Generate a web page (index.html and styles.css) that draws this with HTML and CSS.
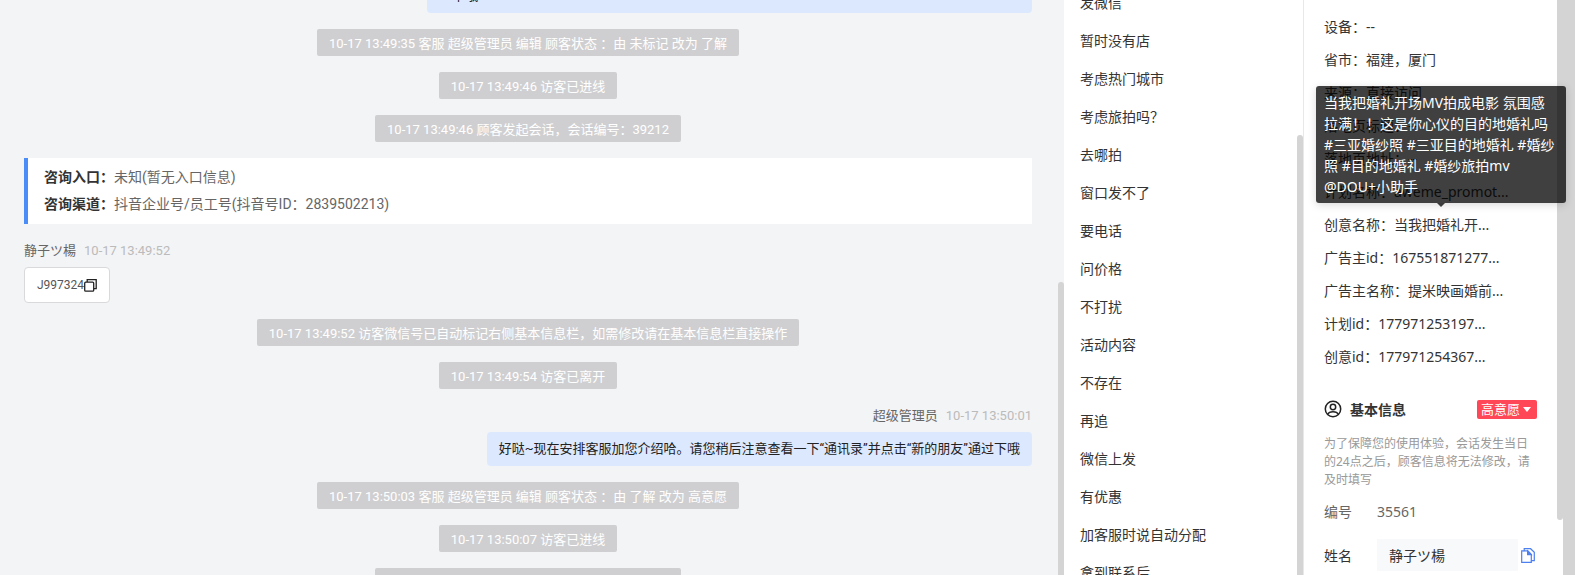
FILE: index.html
```html
<!DOCTYPE html>
<html lang="zh-CN">
<head>
  <meta charset="UTF-8">
  <meta name="viewport" content="width=device-width, initial-scale=1.0">
  <title>客服会话</title>
  <link rel="stylesheet" href="styles.css">
</head>
<body>
  <div class="layout">
    <main class="chat">
      <div class="bubble bubble-long">一下哦</div>
      <div class="notice">10-17 13:49:35 客服 超级管理员 编辑 顾客状态 ：由 未标记 改为 了解</div>
      <div class="notice">10-17 13:49:46 访客已进线</div>
      <div class="notice">10-17 13:49:46 顾客发起会话，会话编号：39212</div>
      <div class="entry-card">
        <p><strong>咨询入口：</strong>未知(暂无入口信息)</p>
        <p><strong>咨询渠道：</strong>抖音企业号/员工号(抖音号ID：2839502213)</p>
      </div>
      <div class="message">
        <div class="meta"><span class="name">静子ツ楊</span><time>10-17 13:49:52</time></div>
        <div class="bubble visitor">
          J997324
          <button class="icon-button" type="button" aria-label="复制">
            <svg width="13" height="13" viewBox="0 0 13 13" fill="none" stroke="#222" stroke-width="1.3">
              <rect x="0.7" y="3.2" width="9" height="9" rx="1"/>
              <path d="M3.2 3V.7h9v9H10"/>
            </svg>
          </button>
        </div>
      </div>
      <div class="notice">10-17 13:49:52 访客微信号已自动标记右侧基本信息栏，如需修改请在基本信息栏直接操作</div>
      <div class="notice">10-17 13:49:54 访客已离开</div>
      <div class="message agent">
        <div class="meta"><span class="name">超级管理员</span><time>10-17 13:50:01</time></div>
        <div class="bubble">好哒~现在安排客服加您介绍哈。请您稍后注意查看一下“通讯录”并点击“新的朋友”通过下哦</div>
      </div>
      <div class="notice">10-17 13:50:03 客服 超级管理员 编辑 顾客状态 ：由 了解 改为 高意愿</div>
      <div class="notice">10-17 13:50:07 访客已进线</div>
      <div class="notice">10-17 13:50:07 顾客发起会话，会话编号：39212</div>
      <div class="scrollbar chat-bar"></div>
    </main>

    <aside class="phrases">
      <ul>
        <li>发微信</li>
        <li>暂时没有店</li>
        <li>考虑热门城市</li>
        <li>考虑旅拍吗？</li>
        <li>去哪拍</li>
        <li>窗口发不了</li>
        <li>要电话</li>
        <li>问价格</li>
        <li>不打扰</li>
        <li>活动内容</li>
        <li>不存在</li>
        <li>再追</li>
        <li>微信上发</li>
        <li>有优惠</li>
        <li>加客服时说自动分配</li>
        <li>拿到联系后</li>
      </ul>
      <div class="scrollbar phrases-bar"></div>
    </aside>

    <aside class="customer">
      <ul class="source">
        <li>设备：--</li>
        <li>省市：福建，厦门</li>
        <li>来源：直接访问</li>
        <li>落地页标题：--</li>
        <li>落地页地址：--</li>
        <li>计划名称：aweme_promot...</li>
        <li class="has-tip">创意名称：当我把婚礼开...
          <div class="tooltip" role="tooltip">当我把婚礼开场MV拍成电影 氛围感拉满！！这是你心仪的目的地婚礼吗 #三亚婚纱照 #三亚目的地婚礼 #婚纱照 #目的地婚礼 #婚纱旅拍mv @DOU+小助手</div>
        </li>
        <li>广告主id：167551871277...</li>
        <li>广告主名称：提米映画婚前...</li>
        <li>计划id：177971253197...</li>
        <li>创意id：177971254367...</li>
      </ul>
      <section class="basic">
        <header class="basic-head">
          <svg width="18" height="18" viewBox="0 0 18 18" fill="none" stroke="#222" stroke-width="1.5">
            <circle cx="9" cy="9" r="7.7"/>
            <circle cx="9" cy="7" r="2.7"/>
            <path d="M3.800 14.300c.8-2 2.300-2.600 5.200-2.600s4.400.6 5.200 2.600"/>
          </svg>
          <h2>基本信息</h2>
          <button class="tag" type="button">高意愿<span class="caret"></span></button>
        </header>
        <p class="hint">为了保障您的使用体验，会话发生当日的24点之后，顾客信息将无法修改，请及时填写</p>
        <div class="field muted"><span class="label">编号</span><span>35561</span></div>
        <div class="field">
          <label class="label" for="name">姓名</label>
          <input id="name" type="text" value="静子ツ楊">
          <button class="icon-button" type="button" aria-label="复制姓名">
            <svg width="14" height="15" viewBox="0 0 14 15" fill="none" stroke="#4d80f0" stroke-width="1.2">
              <path d="M3.200 2.800H.7v11.500h9.600v-1.600"/>
              <path d="M3.200 .7h6.400l3.700 3.600v8.400H10.300V6.400L6.800 2.800H3.200z"/>
              <path d="M6.600 3v3.600h3.600z" fill="#4d80f0"/>
            </svg>
          </button>
        </div>
      </section>
      <div class="scrollbar customer-bar"></div>
    </aside>
    <div class="page-bar"></div>
  </div>
</body>
</html>
```

FILE: styles.css
```css
* {
    box-sizing: border-box;
}
body {
    margin: 0;
    font-family: "Noto Sans", "Noto Sans CJK SC", sans-serif;
    font-size: 14px;
    color: #333;
    background: #fff;
}
ul, p, h2 {
    margin: 0;
    padding: 0;
    list-style: none;
}
.layout {
    display: flex;
    height: 100vh;
    overflow: hidden;
}

/* chat */
.chat {
    position: relative;
    flex: 1;
    min-width: 0;
    display: flex;
    flex-direction: column;
    align-items: center;
    gap: 16px;
    padding: 0 32px 0 24px;
    background: #f3f4f6;
    font-family: Roboto, "Noto Sans CJK SC", sans-serif;
    font-size: 13px;
    overflow: hidden;
}
.chat > * {
    flex-shrink: 0;
}
.notice {
    padding: 5px 12px 2px;
    line-height: 20px;
    color: #fff;
    background: #cfcfd1;
    border-radius: 2px;
}
.bubble {
    padding: 7px 12px;
    line-height: 20px;
    color: #222;
    background: #dce8fd;
    border-radius: 4px;
}
.bubble-long {
    align-self: flex-end;
    width: 60%;
    height: 34px;
    margin-top: -21px;
}
.entry-card {
    align-self: stretch;
    padding: 6px 16px;
    border-left: 4px solid #4b8df8;
    background: #fff;
    font-size: 14px;
    line-height: 27px;
    color: #666;
}
.entry-card strong {
    font-weight: 600;
    color: #333;
}
.message {
    align-self: stretch;
    display: flex;
    flex-direction: column;
    align-items: flex-start;
    gap: 6px;
}
.agent {
    align-items: flex-end;
}
.meta {
    display: flex;
    gap: 8px;
    line-height: 21px;
    color: #666;
}
.meta time {
    color: #bbb;
}
.visitor {
    display: flex;
    align-items: center;
    font-size: 12px;
    color: #555;
    background: #fff;
    border: 1px solid #d9d9dc;
}
.icon-button {
    display: flex;
    padding: 0;
    border: none;
    background: none;
    cursor: pointer;
}

/* quick phrases */
.phrases {
    position: relative;
    width: 240px;
    border-right: 1px solid #e8e8e8;
}
.phrases ul {
    margin-top: -16px;
    padding-left: 16px;
    line-height: 38px;
}

/* customer details */
.customer {
    position: relative;
    width: 259px;
    padding: 10px 26px 0 20px;
}
.source {
    line-height: 33px;
}
.source li {
    white-space: nowrap;
}
.has-tip {
    position: relative;
    z-index: 1;
}
.tooltip {
    position: absolute;
    bottom: 38px;
    left: -8px;
    width: 250px;
    padding: 6px 8px;
    line-height: 21px;
    white-space: normal;
    color: #fff;
    background: rgba(0, 0, 0, 0.75);
    border-radius: 3px;
    box-shadow: 0 2px 8px rgba(0, 0, 0, 0.15);
}
.tooltip::after {
    content: "";
    position: absolute;
    top: 100%;
    left: 50%;
    margin-left: -4px;
    border: 4px solid transparent;
    border-top-color: rgba(0, 0, 0, 0.75);
    border-bottom: none;
}
.basic {
    padding-top: 26px;
}
.basic-head {
    display: flex;
    align-items: center;
    gap: 8px;
    height: 20px;
}
.basic-head h2 {
    flex: 1;
    font-size: 14px;
    font-weight: 600;
    color: #333;
}
.tag {
    display: flex;
    align-items: center;
    gap: 3px;
    height: 19px;
    padding: 0 6px 0 4px;
    border: none;
    border-radius: 2px;
    font-family: inherit;
    font-size: 13px;
    line-height: 19px;
    color: #fff;
    background: #ff4757;
}
.caret {
    border: 4px solid transparent;
    border-top: 5px solid #fff;
    border-bottom: none;
}
.hint {
    padding: 16px 0 6px;
    font-size: 12px;
    line-height: 18px;
    color: #999;
}
.field {
    display: flex;
    align-items: center;
    height: 32px;
    margin-bottom: 12px;
}
.muted {
    color: #666;
}
.label {
    width: 53px;
}
.field input {
    flex: 1;
    min-width: 0;
    height: 32px;
    margin-right: 3px;
    padding: 0 12px;
    border: none;
    background: #f8f9fb;
    font: inherit;
    color: #333;
}
.field .icon-button {
    margin-right: 2px;
}

/* scrollbars */
.scrollbar {
    position: absolute;
    right: 0;
    bottom: 0;
    width: 6px;
    background: #d4d4d4;
    border-radius: 3px 3px 0 0;
}
.chat-bar {
    top: 49%;
}
.phrases-bar {
    top: 135px;
}
.customer-bar {
    top: 0;
    bottom: 55px;
    border-radius: 0 0 3px 3px;
}
.page-bar {
    width: 12px;
    background: #d4d4d4;
}
```
